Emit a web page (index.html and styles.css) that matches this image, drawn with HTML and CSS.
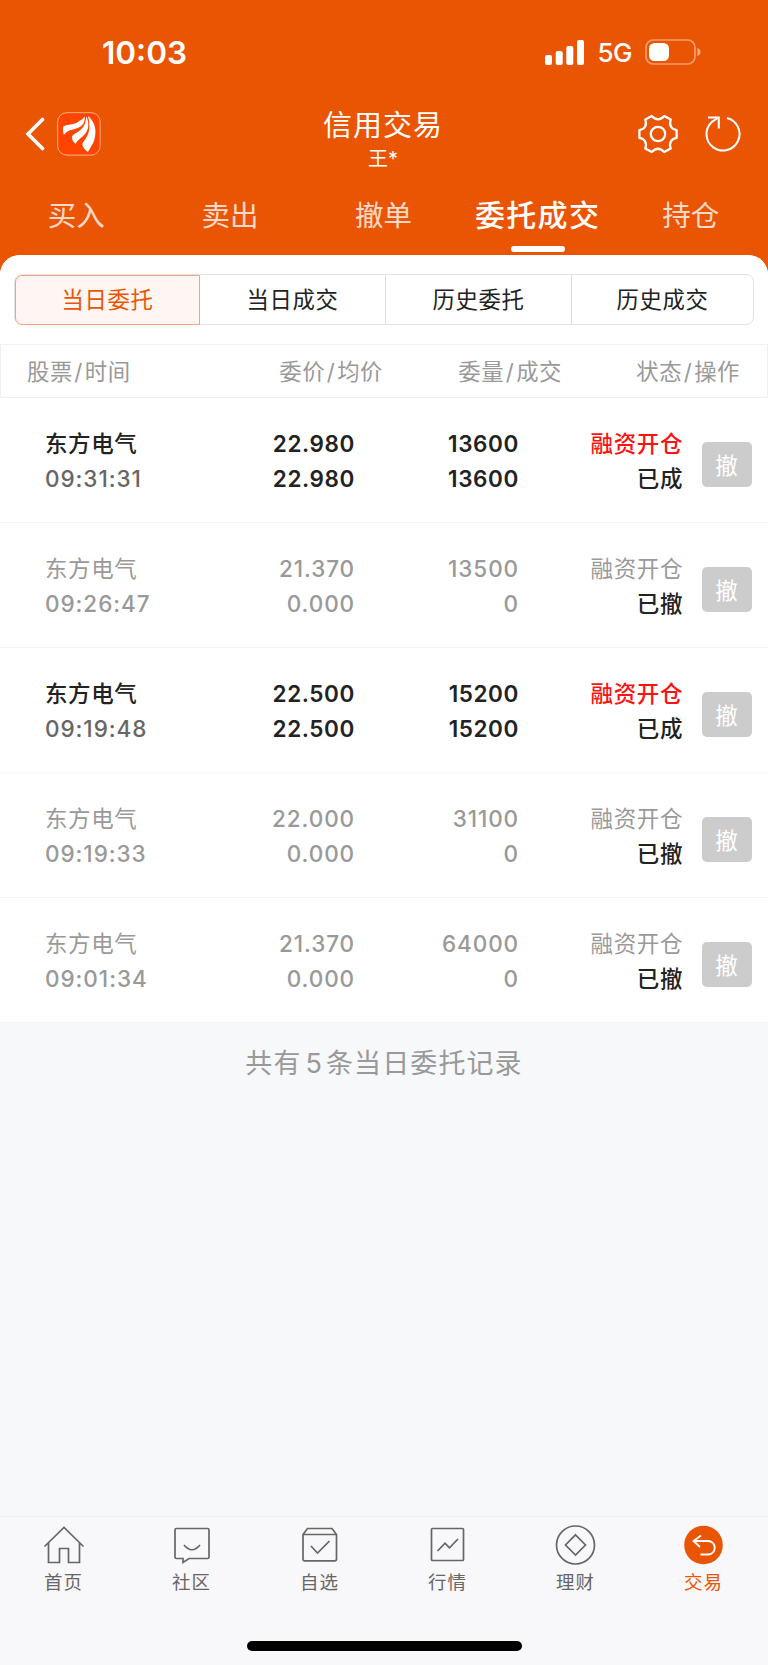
FILE: index.html
```html
<!DOCTYPE html>
<html lang="zh-CN">
<head>
  <meta charset="UTF-8" />
  <meta name="viewport" content="width=device-width, initial-scale=1.0" />
  <title>信用交易</title>
  <link rel="stylesheet" href="styles.css">
</head>
<body>
  <header class="header">
    <div class="status-bar">
      <span class="time">10:03</span>
      <div class="status-icons">
        <svg width="39" height="25" viewBox="0 0 39 25" fill="#fff">
          <rect x="0" y="15" width="7" height="10" rx="2"/>
          <rect x="10.7" y="11" width="7" height="14" rx="2"/>
          <rect x="21.3" y="6" width="7" height="19" rx="2"/>
          <rect x="32" y="0" width="7" height="25" rx="2"/>
        </svg>
        <span class="network">5G</span>
        <svg width="56" height="26" viewBox="0 0 56 26">
          <rect x="1" y="1" width="49" height="24" rx="7.5" fill="none" stroke="#fff" stroke-opacity=".42" stroke-width="1.7"/>
          <rect x="4" y="4" width="20" height="18" rx="5.5" fill="#fff"/>
          <path d="M52.3 9 C56.6 10 56.6 16 52.3 17 Z" fill="#fff" fill-opacity=".5"/>
        </svg>
      </div>
    </div>

    <div class="nav-bar">
      <div class="nav-left">
        <svg width="20" height="34" viewBox="0 0 20 34">
          <path d="M17.5 2.5 L3 17 L17.5 31.5" fill="none" stroke="#fff" stroke-width="3.6" stroke-linecap="round" stroke-linejoin="miter"/>
        </svg>
        <svg class="logo" width="44" height="44" viewBox="0 0 44 44">
          <rect x=".7" y=".7" width="42.4" height="42.4" rx="9" fill="#ff4400" stroke="#ffb08c" stroke-width="1"/>
          <g fill="#fff">
            <path d="M6.2 14.6 C11 11.4 16 13.4 20.5 10.2 C23.5 8 26 7.4 27.8 4.2 C28.2 10.5 25.5 14.3 20 16.2 C14 18.2 10 18 6.9 23 C5.8 20 5.7 17 6.2 14.6Z"/>
            <path d="M15 25 C16.5 19.5 28.5 20.5 29.2 4.4 C32.6 10.5 31.8 17.5 28 22 C25 25.8 21 27 18.5 32 C16 29.5 15 28 15 25Z"/>
            <path d="M31 4 C38 10 40 18 37.3 28 C36 32 33.5 35.5 31 40 C28 38 25 34.5 25.5 32 C26 28.5 36 23 31 4Z"/>
          </g>
        </svg>
      </div>
      <div class="nav-title">
        <h1>信用交易</h1>
        <p>王*</p>
      </div>
      <div class="nav-right">
        <svg width="42" height="42" viewBox="-21 -21 42 42" fill="none" stroke="#fff" stroke-width="2.3" stroke-linejoin="round">
          <path d="M18.6 -3.9 V3.9 C13 5 10.8 8.8 12.7 14.4 L6.2 18.1 C2.4 13.6 -2.4 13.6 -6.2 18.1 L-12.7 14.4 C-10.8 8.8 -13 5 -18.6 3.9 V-3.9 C-13 -5 -10.8 -8.8 -12.7 -14.4 L-6.2 -18.1 C-2.4 -13.6 2.4 -13.6 6.2 -18.1 L12.7 -14.4 C10.8 -8.8 13 -5 18.6 -3.9Z"/>
          <circle r="7.2"/>
        </svg>
        <svg width="40" height="40" viewBox="-20 -20 40 40" fill="none" stroke="#fff" stroke-width="2">
          <path d="M4 -16 A16.5 16.5 0 1 1 -11.2 -12.1 L-5 -16"/>
          <path d="M-15 -16.6 H-4.2 V-5.5"/>
        </svg>
      </div>
    </div>

    <nav class="tabs">
      <span>买入</span>
      <span>卖出</span>
      <span>撤单</span>
      <span class="active">委托成交</span>
      <span>持仓</span>
    </nav>
  </header>

  <main>
    <section class="panel">
      <div class="segments">
        <span class="selected">当日委托</span>
        <span>当日成交</span>
        <span>历史委托</span>
        <span>历史成交</span>
      </div>

      <div class="list-head">
        <span>股票<i>/</i>时间</span>
        <span>委价<i>/</i>均价</span>
        <span>委量<i>/</i>成交</span>
        <span>状态<i>/</i>操作</span>
      </div>

      <div class="order">
        <div class="stock"><b>东方电气</b><em>09:31:31</em></div>
        <div class="num">22.980<br>22.980</div>
        <div class="num">13600<br>13600</div>
        <div class="state"><b>融资开仓</b><em>已成</em></div>
        <button>撤</button>
      </div>
      <div class="order cancelled">
        <div class="stock"><b>东方电气</b><em>09:26:47</em></div>
        <div class="num">21.370<br>0.000</div>
        <div class="num">13500<br>0</div>
        <div class="state"><b>融资开仓</b><em>已撤</em></div>
        <button>撤</button>
      </div>
      <div class="order">
        <div class="stock"><b>东方电气</b><em>09:19:48</em></div>
        <div class="num">22.500<br>22.500</div>
        <div class="num">15200<br>15200</div>
        <div class="state"><b>融资开仓</b><em>已成</em></div>
        <button>撤</button>
      </div>
      <div class="order cancelled">
        <div class="stock"><b>东方电气</b><em>09:19:33</em></div>
        <div class="num">22.000<br>0.000</div>
        <div class="num">31100<br>0</div>
        <div class="state"><b>融资开仓</b><em>已撤</em></div>
        <button>撤</button>
      </div>
      <div class="order cancelled">
        <div class="stock"><b>东方电气</b><em>09:01:34</em></div>
        <div class="num">21.370<br>0.000</div>
        <div class="num">64000<br>0</div>
        <div class="state"><b>融资开仓</b><em>已撤</em></div>
        <button>撤</button>
      </div>
    </section>

    <p class="summary">共有<span>5</span>条当日委托记录</p>
  </main>

  <footer class="footer">
    <nav class="tab-bar">
      <div class="tab-item">
        <svg width="42" height="42" viewBox="0 0 42 42">
          <path d="M1.5 22.5 L21 3.5 L40.5 22.5 M5.5 19 V38.5 H16.5 V24.5 H25.5 V38.5 H36.5 V19"/>
        </svg>
        <span>首页</span>
      </div>
      <div class="tab-item">
        <svg width="42" height="42" viewBox="0 0 42 42">
          <path d="M5.5 4.5 H36.5 Q38 4.5 38 6 V33 Q38 34.5 36.5 34.5 H18 L12 38.5 V34.5 H5.5 Q4 34.5 4 33 V6 Q4 4.5 5.5 4.5Z M13 21 Q21 30.5 29 21"/>
        </svg>
        <span>社区</span>
      </div>
      <div class="tab-item">
        <svg width="42" height="42" viewBox="0 0 42 42">
          <path d="M4 10.5 L8.5 4.5 H33 L37.5 10.5 V35 Q37.5 36.8 35.7 36.8 H5.8 Q4 36.8 4 35 Z M4 10.5 H37.5 M12 22 L18.5 29 L30.5 17"/>
        </svg>
        <span>自选</span>
      </div>
      <div class="tab-item">
        <svg width="42" height="42" viewBox="0 0 42 42">
          <rect x="4.5" y="4.5" width="32" height="32" rx="1"/>
          <path d="M10.5 27 L18 19.2 L22.5 23.8 L31 15"/>
        </svg>
        <span>行情</span>
      </div>
      <div class="tab-item">
        <svg width="42" height="42" viewBox="0 0 42 42">
          <circle cx="20.5" cy="21" r="19"/>
          <path d="M20.5 10.8 L30.5 21 L20.5 31 L10.5 21Z"/>
        </svg>
        <span>理财</span>
      </div>
      <div class="tab-item current">
        <svg width="42" height="42" viewBox="0 0 42 42">
          <circle class="disc" cx="20.5" cy="21" r="19.3"/>
          <path class="arrow" d="M18 11.5 L10.5 17 L17 23 M10.5 17 H25 A6.7 6.7 0 0 1 25 30.5 H17.5"/>
        </svg>
        <span>交易</span>
      </div>
    </nav>
    <div class="home-indicator"></div>
  </footer>
</body>
</html>
```

FILE: styles.css
```css
* {
  box-sizing: border-box;
  margin: 0;
  padding: 0;
}

body {
  width: 768px;
  height: 1665px;
  display: flex;
  flex-direction: column;
  background-color: #ea5504;
  font-family: Inter, "Noto Sans CJK SC", sans-serif;
  color: #222;
  overflow: hidden;
}

svg {
  display: block;
}

em,
i {
  font-style: normal;
}

/* header */
.header {
  height: 255px;
  color: #fff;
}

.status-bar {
  height: 104px;
  padding: 0 67px 0 102px;
  display: flex;
  justify-content: space-between;
  align-items: center;
}

.time {
  padding-top: 1px;
  font-size: 31.5px;
  font-weight: 600;
}

.status-icons {
  display: flex;
  align-items: center;
  gap: 13px;
}

.network {
  font-size: 26px;
  font-weight: 500;
  letter-spacing: -0.5px;
  line-height: 30px;
  padding-top: 2px;
}

.nav-bar {
  height: 68px;
  padding: 0 25px 0 25px;
  display: grid;
  grid-template-columns: 1fr auto 1fr;
  align-items: center;
}

.nav-left,
.nav-right {
  display: flex;
  align-items: center;
  gap: 12px;
  padding-bottom: 10px;
}

.nav-right {
  justify-content: flex-end;
  gap: 24px;
}

.nav-title {
  padding: 4px 2px 0 0;
  text-align: center;
}

.nav-title h1 {
  font-size: 29px;
  font-weight: 400;
  line-height: 36px;
  letter-spacing: 1px;
}

.nav-title p {
  font-size: 20px;
  line-height: 30px;
}

.tabs {
  height: 83px;
  display: grid;
  grid-template-columns: repeat(5, 1fr);
}

.tabs span {
  position: relative;
  padding: 22px 1px 0 0;
  font-size: 28.5px;
  line-height: 44px;
  text-align: center;
  color: rgba(255, 255, 255, 0.8);
}

.tabs .active {
  padding: 21px 0 0;
  font-size: 30px;
  font-weight: 500;
  letter-spacing: 1.3px;
  white-space: nowrap;
  color: #fff;
}

.tabs .active::after {
  content: "";
  position: absolute;
  left: 50%;
  bottom: 3px;
  width: 54px;
  height: 6px;
  margin-left: -27px;
  border-radius: 3px;
  background-color: #fff;
}

/* order list */
main {
  flex: 1;
  background-color: #f6f8fa;
  border-radius: 20px 20px 0 0;
}

.panel {
  background-color: #fff;
  border-radius: 20px 20px 0 0;
  padding-top: 19px;
}

.segments {
  height: 51px;
  margin: 0 14px 0 14px;
  display: grid;
  grid-template-columns: 185px 185px 186px 182px;
  border: 1px solid #e2e3e8;
  border-radius: 8px;
}

.segments span {
  font-size: 22.4px;
  letter-spacing: 0.6px;
  line-height: 50px;
  text-align: center;
  border-left: 1px solid #dcdde3;
}

.segments .selected {
  line-height: 48px;
  color: #ea5504;
  background-color: #fff5f2;
  border: 1px solid #f3a47c;
  border-radius: 7px 0 0 7px;
}

.segments .selected + span {
  border-left: none;
}

.list-head {
  height: 54px;
  margin-top: 19px;
  padding: 0 26px;
  display: grid;
  grid-template-columns: 172px 184px 179px 178px;
  border: 1px solid #f0f0f0;
  font-size: 22.4px;
  letter-spacing: 0.5px;
  line-height: 53px;
  text-align: right;
  color: #999;
}

.list-head span:first-child {
  text-align: left;
}

.list-head i {
  margin: 0 2px 0 1.5px;
}

.order {
  height: 125px;
  padding: 28px 16px 0 45px;
  display: grid;
  grid-template-columns: 156px 154px 164px 164px 69px;
  border-bottom: 1px solid #f3f3f3;
  font-size: 22.5px;
  line-height: 35px;
  text-align: right;
  letter-spacing: 0.6px;
}

.stock b,
.stock em,
.state b,
.state em {
  display: block;
  font-weight: 500;
}

.stock {
  text-align: left;
}

.stock em {
  font-weight: 500;
  letter-spacing: 0.95px;
  color: #666;
}

.num {
  font-weight: 600;
}

.state b {
  color: #f81414;
}

.order button {
  width: 50px;
  height: 45px;
  margin: 16px 0 0 18.5px;
  border: none;
  border-radius: 5px;
  background-color: #ccc;
  color: #fff;
  font: 22.5px/45px "Noto Sans CJK SC", sans-serif;
}

.cancelled {
  color: #999;
}

.cancelled .num {
  font-weight: 500;
  letter-spacing: 0.9px;
}

.cancelled .stock b,
.cancelled .state b {
  font-weight: 400;
  color: #999;
}

.cancelled .stock em {
  color: #999;
}

.cancelled .state em {
  color: #222;
}

.summary {
  padding-top: 21px;
  font-size: 27px;
  line-height: 40px;
  letter-spacing: 1.1px;
  text-align: center;
  color: #999;
}

.summary span {
  margin: 0 3px 0 4px;
}

/* bottom navigation */
.footer {
  height: 149px;
  background-color: #f8f8fa;
  border-top: 1px solid #ededf0;
}

.tab-bar {
  height: 124px;
  padding-top: 7px;
  display: grid;
  grid-template-columns: repeat(6, 1fr);
}

.tab-item {
  display: flex;
  flex-direction: column;
  align-items: center;
  font-size: 18.5px;
  line-height: 32px;
  letter-spacing: 1px;
  color: #666;
}

.tab-item span {
  padding-right: 1px;
}

.tab-item svg {
  fill: none;
  stroke: #666;
  stroke-width: 1.7;
}

.tab-item .disc {
  fill: #ea5504;
  stroke: none;
}

.tab-item .arrow {
  stroke: #fff;
  stroke-width: 1.8;
}

.current {
  color: #ea5504;
}

.home-indicator {
  width: 275px;
  height: 10px;
  margin: 0 auto;
  border-radius: 5px;
  background-color: #000;
}
```
